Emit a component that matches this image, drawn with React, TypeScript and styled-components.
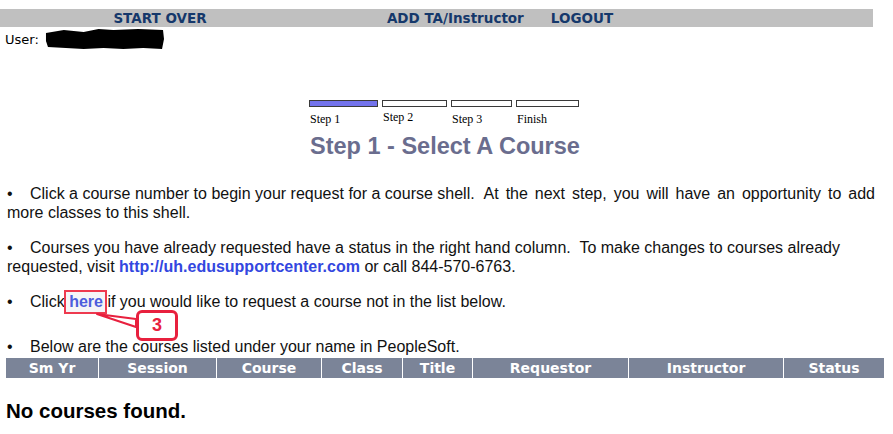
import React from "react";
import styled, { createGlobalStyle } from "styled-components";

const Global = createGlobalStyle`
  html, body { margin: 0; padding: 0; background: #fff; }
  body { font-family: "Liberation Sans", Arial, sans-serif; color: #000; }
`;

const Page = styled.div`
  width: 893px;
  height: 434px;
  overflow: hidden;
  padding-top: 9px;
  box-sizing: border-box;
`;

const NavBar = styled.div`
  width: 873px;
  height: 18px;
  background: #c0c0c0;
  display: grid;
  grid-template-columns: 320px 360px 1fr;
  align-items: center;
`;

const NavCell = styled.div`
  display: flex;
  justify-content: center;
  gap: 27px;
  font-family: "DejaVu Sans", Verdana, sans-serif;
  font-weight: bold;
  font-size: 13.5px;
  line-height: 18px;
  color: #15386b;
  white-space: nowrap;
`;

const UserRow = styled.div`
  display: flex;
  align-items: center;
  height: 24px;
  padding-left: 5px;
  font-family: "DejaVu Sans", Verdana, sans-serif;
  font-size: 13px;
  gap: 5px;
`;

const Steps = styled.div`
  margin-top: 49px;
  margin-left: 309px;
  display: grid;
  grid-template-columns: 73px 69px 65px 64px;
  align-items: start;
`;

const StepCol = styled.div`
  display: flex;
  flex-direction: column;
`;

const StepBox = styled.div<{ $w: number; $active?: boolean }>`
  width: ${(p) => p.$w}px;
  height: 5px;
  border: 1px solid #3a3a3a;
  background: ${(p) => (p.$active ? "#7373ec" : "#fff")};
  box-sizing: content-box;
`;

const StepLabel = styled.div<{ $up?: boolean }>`
  font-family: "Liberation Serif", "Times New Roman", serif;
  font-size: 12px;
  margin-top: ${(p) => (p.$up ? 4 : 6)}px;
  padding-left: 1px;
  line-height: 13px;
`;

const Heading = styled.h1`
  margin: 6px 0 0 310px;
  font-family: "Liberation Sans", Arial, sans-serif;
  font-weight: bold;
  font-size: 23.5px;
  line-height: 28px;
  color: #6a6d8e;
`;

const Bullet = styled.p<{ $top: number }>`
  margin: ${(p) => p.$top}px 0 0 0;
  padding: 0 9px 0 7px;
  font-size: 16px;
  line-height: 19px;
  color: #111;
  white-space: pre-wrap;

  &::before {
    content: "•";
    display: inline-block;
    width: 23px;
  }
`;

const Spread = styled.span`
  word-spacing: 2.5px;
`;

const Link = styled.a`
  color: #3347e0;
  font-weight: bold;
  text-decoration: none;
`;

const HereWrap = styled.span`
  position: relative;
`;

const HereBox = styled.span`
  position: absolute;
  left: -5px;
  top: -3px;
  width: 43px;
  height: 24px;
  border: 2px solid #ee3a4f;
  box-sizing: border-box;
  background: rgba(200, 200, 210, 0.18);
  pointer-events: none;
`;

const Callout = styled.span`
  position: absolute;
  left: 67px;
  top: 17px;
  width: 42px;
  height: 31px;
  border: 3px solid #e8203e;
  border-radius: 6px;
  background: #fff;
  box-sizing: border-box;
  display: flex;
  align-items: center;
  justify-content: center;
  color: #e8203e;
  font-weight: bold;
  font-size: 18px;
  font-family: "Liberation Sans", Arial, sans-serif;
`;

const Pointer = styled.svg`
  position: absolute;
  left: 0;
  top: 0;
  overflow: visible;
`;

const Table = styled.div`
  margin: 2px 0 0 6px;
  display: grid;
  grid-template-columns: 92px 117px 104px 80px 69px 155px 154px 100px;
  column-gap: 1px;
`;

const HeadCell = styled.div`
  background: #7b8498;
  height: 20px;
  display: flex;
  align-items: center;
  justify-content: center;
  color: #fff;
  font-family: "DejaVu Sans", Verdana, sans-serif;
  font-weight: bold;
  font-size: 14px;
`;

const Empty = styled.div`
  margin: 21px 0 0 6px;
  font-weight: bold;
  font-size: 20.5px;
  line-height: 24px;
  color: #000;
`;

const columns = ["Sm Yr", "Session", "Course", "Class", "Title", "Requestor", "Instructor", "Status"];
const steps = [
  { w: 67, label: "Step 1", active: true },
  { w: 63, label: "Step 2", up: true },
  { w: 59, label: "Step 3" },
  { w: 61, label: "Finish" },
];

export default function App() {
  return (
    <Page>
      <Global />
      <NavBar>
        <NavCell>START OVER</NavCell>
        <NavCell>
          <span>ADD TA/Instructor</span>
          <span>LOGOUT</span>
        </NavCell>
        <div />
      </NavBar>
      <UserRow>
        <span>User:</span>
        <svg width="121" height="24" viewBox="0 0 122 24">
          <path
            d="M2 6 L20 3 L40 5 L55 2 L70 3 L95 2 L120 3 L121 12 L119 22 L100 21 L80 22 L60 21 L40 22 L22 21 L4 20 L2 14 Z"
            fill="#000"
          />
        </svg>
      </UserRow>
      <Steps>
        {steps.map((s) => (
          <StepCol key={s.label}>
            <StepBox $w={s.w} $active={s.active} />
            <StepLabel $up={s.up}>{s.label}</StepLabel>
          </StepCol>
        ))}
      </Steps>
      <Heading>Step 1 - Select A Course</Heading>
      <Bullet $top={24}>
        Click a course number to begin your request for a course shell.  <Spread>At the next step, you will have an opportunity to add</Spread> more classes to this shell.
      </Bullet>
      <Bullet $top={16}>
        Courses you have already requested have a status in the right hand column.  To make changes to courses already requested, visit <Link>http://uh.edusupportcenter.com</Link> or call 844-570-6763.
      </Bullet>
      <Bullet $top={16}>
        Click{" "}
        <HereWrap>
          <Link>here</Link>
          <HereBox />
          <Pointer width="70" height="40">
            <polygon points="28,21 67,26 67,34" fill="#fff" stroke="#e8203e" strokeWidth="2" strokeLinejoin="round" />
          </Pointer>
          <Callout>3</Callout>
        </HereWrap>{" "}
        if you would like to request a course not in the list below.
      </Bullet>
      <Bullet $top={26}>Below are the courses listed under your name in PeopleSoft.</Bullet>
      <Table>
        {columns.map((c) => (
          <HeadCell key={c}>{c}</HeadCell>
        ))}
      </Table>
      <Empty>No courses found.</Empty>
    </Page>
  );
}
